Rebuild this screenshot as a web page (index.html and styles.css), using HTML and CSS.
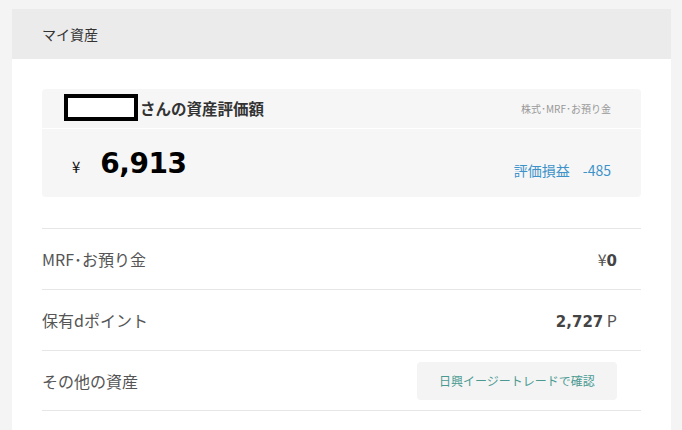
FILE: index.html
```html
<!DOCTYPE html>
<html lang="ja">
<head>
	<meta charset="UTF-8">
	<title>マイ資産</title>
	<link rel="stylesheet" href="styles.css">
</head>
<body>
	<div class="panel">
		<div class="panel-head">マイ資産</div>
		<div class="panel-body">
			<div class="summary">
				<div class="summary-top">
					<div class="owner"><span class="masked"></span>さんの資産評価額</div>
					<div class="note">株式･MRF･お預り金</div>
				</div>
				<div class="summary-main">
					<div class="total"><span class="yen">¥</span><span class="amount">6,913</span></div>
					<div class="profit">評価損益<span class="profit-val">-485</span></div>
				</div>
			</div>
			<div class="rows">
				<div class="row">
					<span class="label">MRF･お預り金</span>
					<span class="value">¥<b>0</b></span>
				</div>
				<div class="row">
					<span class="label">保有dポイント</span>
					<span class="value"><b>2,727</b> P</span>
				</div>
				<div class="row">
					<span class="label">その他の資産</span>
					<a class="btn" href="#">日興イージートレードで確認</a>
				</div>
			</div>
		</div>
	</div>
</body>
</html>
```
FILE: styles.css
```css
*{
	margin: 0;
	padding: 0;
	box-sizing: border-box;
}
body{
	background: #f4f4f4;
	padding: 9px 11px 0 12px;
	font-family: "Noto Sans CJK JP", "Noto Sans", sans-serif;
	color: #333;
}
.panel{
	background: #fff;
	height: 430px;
}
.panel-head{
	height: 50px;
	background: #ebebeb;
	padding-left: 30px;
	display: flex;
	align-items: center;
	font-size: 14px;
	color: #333;
}
.panel-body{
	padding: 30px 30px;
}
/* 資産評価額カード */
.summary{
	background: #f6f6f6;
	border-radius: 4px;
}
.summary-top{
	height: 40px;
	border-bottom: 1px solid #fff;
	display: flex;
	align-items: center;
	justify-content: space-between;
	padding: 0 30px 0 22px;
}
.owner{
	display: flex;
	align-items: center;
	font-size: 15.5px;
	font-weight: bold;
	color: #333;
	margin-top: -2px;
}
.masked{
	display: inline-block;
	width: 74px;
	height: 27px;
	border: 4px solid #000;
	background: #fff;
	margin-right: 2px;
}
.note{
	font-size: 10px;
	color: #999;
}
.summary-main{
	height: 68px;
	display: flex;
	align-items: center;
	justify-content: space-between;
	padding: 0 30px 0 30px;
}
.total{
	display: flex;
	align-items: baseline;
}
.yen{
	font-size: 15px;
	margin-right: 20px;
	color: #111;
}
.amount{
	font-family: "DejaVu Sans", sans-serif;
	font-size: 28px;
	font-weight: bold;
	color: #000;
	letter-spacing: -0.5px;
}
.profit{
	font-size: 14px;
	color: #3d93c9;
	margin-top: 14px;
}
.profit-val{
	margin-left: 13px;
}
/* 明細行 */
.rows{
	margin-top: 31px;
}
.row{
	height: 61px;
	border-top: 1px solid #e6e6e6;
	display: flex;
	align-items: center;
	justify-content: space-between;
	padding-right: 24px;
}
.row:last-child{
	border-bottom: 1px solid #e6e6e6;
}
.label{
	font-size: 16px;
	color: #555;
}
.value{
	font-size: 16px;
	color: #555;
}
.value b{
	font-family: "DejaVu Sans", sans-serif;
	font-size: 15px;
	color: #444;
}
.btn{
	display: flex;
	align-items: center;
	justify-content: center;
	width: 200px;
	height: 38px;
	background: #f4f4f4;
	border-radius: 4px;
	font-size: 12px;
	color: #4a9a92;
	text-decoration: none;
}
```
